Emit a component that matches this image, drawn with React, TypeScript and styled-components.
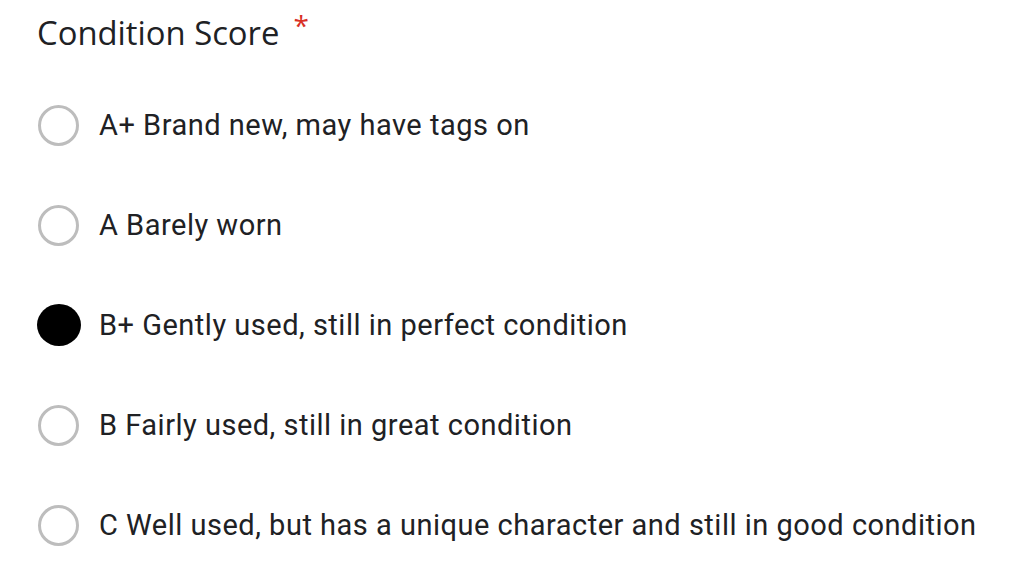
import styled, { createGlobalStyle } from 'styled-components';

const GlobalStyle = createGlobalStyle`
  html, body {
    margin: 0;
    padding: 0;
    background: #ffffff;
  }
`;

const Container = styled.div`
  width: 1024px;
  height: 563px;
  padding: 11px 0 0 37px;
  box-sizing: border-box;
  display: flex;
  flex-direction: column;
  background: #ffffff;
  color: #202124;
`;

const Title = styled.div`
  display: flex;
  align-items: flex-start;
  font-family: 'Open Sans', sans-serif;
  font-size: 32.8px;
  line-height: 44px;
  height: 44px;
`;

const Required = styled.span`
  color: #d93025;
  font-size: 28px;
  line-height: 28px;
  margin-left: 14px;
`;

const Options = styled.div`
  display: flex;
  flex-direction: column;
  margin-top: 20px;
`;

const Row = styled.label`
  display: flex;
  align-items: center;
  height: 100px;
  gap: 18px;
`;

const Radio = styled.span<{ $checked?: boolean }>`
  width: ${(p) => (p.$checked ? '44px' : '41px')};
  height: ${(p) => (p.$checked ? '42px' : '41px')};
  margin-left: ${(p) => (p.$checked ? '0' : '1px')};
  margin-right: ${(p) => (p.$checked ? '0' : '2px')};
  box-sizing: border-box;
  border-radius: 50%;
  border: ${(p) => (p.$checked ? 'none' : '3.5px solid #bdbdbd')};
  background: ${(p) => (p.$checked ? '#000000' : '#ffffff')};
  flex-shrink: 0;
`;

const Label = styled.span`
  font-family: Roboto, sans-serif;
  font-size: 29px;
  color: #202124;
  letter-spacing: 0.5px;
`;

const options = [
  { label: 'A+ Brand new, may have tags on', checked: false },
  { label: 'A Barely worn', checked: false },
  { label: 'B+ Gently used, still in perfect condition', checked: true },
  { label: 'B Fairly used, still in great condition', checked: false },
  { label: 'C Well used, but has a unique character and still in good condition', checked: false },
];

function App() {
  return (
    <>
      <GlobalStyle />
      <Container>
        <Title>
          Condition Score<Required>*</Required>
        </Title>
        <Options>
          {options.map((o) => (
            <Row key={o.label}>
              <Radio $checked={o.checked} />
              <Label>{o.label}</Label>
            </Row>
          ))}
        </Options>
      </Container>
    </>
  );
}

export default App;
